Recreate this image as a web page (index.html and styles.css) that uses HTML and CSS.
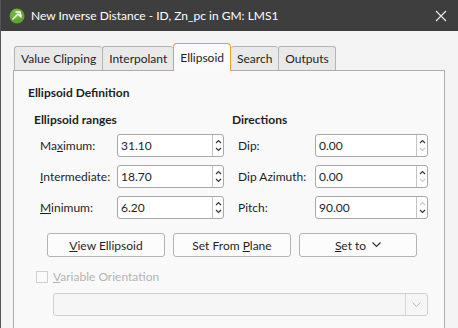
FILE: index.html
```html
<!DOCTYPE html>
<html lang="en">

<head>
    <meta charset="UTF-8">
    <title>New Inverse Distance</title>
    <link rel="stylesheet" href="styles.css">
</head>

<body>
    <div class="window">
        <div class="titlebar">
            <svg class="app-icon" width="16" height="16" viewBox="0 0 16 16">
                <circle cx="8" cy="8" r="7.5" fill="#5ea72f" />
                <circle cx="7" cy="6" r="5" fill="#7cc04a" opacity="0.6" />
                <path d="M4 11 L9 6 M7 4 L11 4 L12 8 M9 6 L12 9" stroke="#fff" stroke-width="1.6" fill="none" stroke-linecap="round" />
            </svg>
            <span class="title">New Inverse Distance - ID, Zn_pc in GM: LMS1</span>
            <svg class="close" width="12" height="12" viewBox="0 0 12 12">
                <path d="M1 1 L11 11 M11 1 L1 11" stroke="#e8e8e8" stroke-width="1.2" />
            </svg>
        </div>

        <div class="content">
            <div class="tabs">
                <div class="tab">Value Clipping</div>
                <div class="tab">Interpolant</div>
                <div class="tab active">Ellipsoid</div>
                <div class="tab">Search</div>
                <div class="tab">Outputs</div>
            </div>

            <div class="panel">
                <div class="heading">Ellipsoid Definition</div>

                <div class="groups">
                    <div class="group left">
                        <div class="subheading">Ellipsoid ranges</div>
                        <div class="row">
                            <label>Ma<u>x</u>imum:</label>
                            <div class="spin">
                                <span class="val">31.10</span>
                                <span class="arrows">
                                    <svg class="up" width="7" height="5" viewBox="0 0 7 5"><path d="M1 4 L3.5 1.5 L6 4" /></svg>
                                    <svg class="down" width="7" height="5" viewBox="0 0 7 5"><path d="M1 1 L3.5 3.5 L6 1" /></svg>
                                </span>
                            </div>
                        </div>
                        <div class="row">
                            <label><u>I</u>ntermediate:</label>
                            <div class="spin">
                                <span class="val">18.70</span>
                                <span class="arrows">
                                    <svg class="up" width="7" height="5" viewBox="0 0 7 5"><path d="M1 4 L3.5 1.5 L6 4" /></svg>
                                    <svg class="down" width="7" height="5" viewBox="0 0 7 5"><path d="M1 1 L3.5 3.5 L6 1" /></svg>
                                </span>
                            </div>
                        </div>
                        <div class="row">
                            <label><u>M</u>inimum:</label>
                            <div class="spin">
                                <span class="val">6.20</span>
                                <span class="arrows">
                                    <svg class="up" width="7" height="5" viewBox="0 0 7 5"><path d="M1 4 L3.5 1.5 L6 4" /></svg>
                                    <svg class="down" width="7" height="5" viewBox="0 0 7 5"><path d="M1 1 L3.5 3.5 L6 1" /></svg>
                                </span>
                            </div>
                        </div>
                    </div>

                    <div class="group right">
                        <div class="subheading">Directions</div>
                        <div class="row">
                            <label>Dip:</label>
                            <div class="spin">
                                <span class="val">0.00</span>
                                <span class="arrows">
                                    <svg class="up" width="7" height="5" viewBox="0 0 7 5"><path d="M1 4 L3.5 1.5 L6 4" /></svg>
                                    <svg class="down off" width="7" height="5" viewBox="0 0 7 5"><path d="M1 1 L3.5 3.5 L6 1" /></svg>
                                </span>
                            </div>
                        </div>
                        <div class="row">
                            <label>Dip Azimuth:</label>
                            <div class="spin">
                                <span class="val">0.00</span>
                                <span class="arrows">
                                    <svg class="up" width="7" height="5" viewBox="0 0 7 5"><path d="M1 4 L3.5 1.5 L6 4" /></svg>
                                    <svg class="down off" width="7" height="5" viewBox="0 0 7 5"><path d="M1 1 L3.5 3.5 L6 1" /></svg>
                                </span>
                            </div>
                        </div>
                        <div class="row">
                            <label>Pitch:</label>
                            <div class="spin">
                                <span class="val">90.00</span>
                                <span class="arrows">
                                    <svg class="up off" width="7" height="5" viewBox="0 0 7 5"><path d="M1 4 L3.5 1.5 L6 4" /></svg>
                                    <svg class="down" width="7" height="5" viewBox="0 0 7 5"><path d="M1 1 L3.5 3.5 L6 1" /></svg>
                                </span>
                            </div>
                        </div>
                    </div>
                </div>

                <div class="buttons">
                    <div class="btn"><span><u>V</u>iew Ellipsoid</span></div>
                    <div class="btn"><span>Set From <u>P</u>lane</span></div>
                    <div class="btn"><span><u>S</u>et to</span>
                        <svg width="9" height="6" viewBox="0 0 9 6"><path d="M0.5 0.5 L4.5 4.5 L8.5 0.5" stroke="#333" stroke-width="1.2" fill="none" /></svg>
                    </div>
                </div>

                <div class="check-row">
                    <span class="checkbox"></span>
                    <span class="check-label"><u>V</u>ariable Orientation</span>
                </div>

                <div class="combo">
                    <span class="combo-field"></span>
                    <span class="combo-arrow">
                        <svg width="9" height="6" viewBox="0 0 9 6"><path d="M0.5 0.5 L4.5 4.5 L8.5 0.5" stroke="#b8b8b8" stroke-width="1" fill="none" /></svg>
                    </span>
                </div>
            </div>
        </div>
    </div>
</body>

</html>
```

FILE: styles.css
```css
* {
    margin: 0;
    padding: 0;
    box-sizing: border-box;
}

body {
    font-family: "Lato", "Noto Sans", sans-serif;
    font-size: 12px;
    color: #1e1e1e;
    background: #f4f4f4;
}

.window {
    width: 458px;
    height: 328px;
    border-left: 1px solid #555;
    overflow: hidden;
}

.titlebar {
    height: 31px;
    background: #3e3e3e;
    display: flex;
    align-items: center;
    padding: 0 11px 0 8px;
    color: #fff;
}

.app-icon {
    margin-right: 6px;
}

.title {
    font-size: 12px;
    flex: 1;
}

.content {
    padding: 12px 13px 0 12px;
}

.tabs {
    display: flex;
    align-items: flex-end;
    height: 27px;
    padding-left: 1px;
    position: relative;
    z-index: 1;
}

.tab {
    height: 24px;
    line-height: 23px;
    padding: 0 6px;
    background: #e9e9e9;
    border: 1px solid #b4b4b4;
    border-bottom: none;
    border-right: none;
    border-radius: 3px 3px 0 0;
}

.tab:nth-child(5) {
    border-right: 1px solid #b4b4b4;
}

.tab.active {
    height: 28px;
    line-height: 27px;
    background: #fafafa;
    border: 1px solid #f0a030;
    border-bottom: none;
    margin-bottom: -1px;
    border-radius: 4px 4px 0 0;
}

.tab.active + .tab {
    border-left: none;
}

.panel {
    height: 270px;
    background: #f9f9f9;
    border: 1px solid #acacac;
    padding: 14px 14px 0 14px;
}

.heading,
.subheading {
    font-weight: bold;
    line-height: 16px;
}

.groups {
    display: flex;
    margin-top: 11px;
    padding-left: 6px;
}

.group.left {
    width: 198px;
}

.group.right {
    width: 196px;
}

.row {
    display: flex;
    align-items: center;
    margin-top: 8px;
    padding-left: 6px;
}

.subheading + .row {
    margin-top: 6px;
}

.row label {
    width: 77px;
}

.spin {
    display: flex;
    height: 23px;
    width: 107px;
    background: #fff;
    border: 1px solid #a8a8a8;
    border-radius: 3px;
}

.group.right .spin {
    width: 113px;
}

.spin .val {
    flex: 1;
    line-height: 21px;
    padding-left: 3px;
}

.arrows {
    width: 11px;
    border-left: 1px solid #c4c4c4;
    display: flex;
    flex-direction: column;
    align-items: center;
    justify-content: center;
    gap: 3px;
}

.arrows svg path {
    fill: none;
    stroke: #333;
    stroke-width: 1.1;
}

.arrows svg.off path {
    stroke: #c8c8c8;
}

.buttons {
    display: flex;
    gap: 8px;
    margin-top: 14px;
    padding-left: 19px;
}

.btn {
    width: 118px;
    height: 24px;
    border: 1px solid #b4b4b4;
    border-radius: 3px;
    background: #fcfcfc;
    display: flex;
    align-items: center;
    justify-content: center;
    gap: 6px;
}

.check-row {
    display: flex;
    align-items: center;
    margin-top: 12px;
    padding-left: 8px;
    color: #b4b4b4;
}

.checkbox {
    width: 12px;
    height: 12px;
    border: 1px solid #d0d0d0;
    background: #fafafa;
    margin-right: 5px;
}

.combo {
    display: flex;
    margin-top: 9px;
    margin-left: 25px;
    width: 375px;
    height: 23px;
    border: 1px solid #cfcfcf;
    border-radius: 3px;
    background: #f6f6f6;
}

.combo-field {
    flex: 1;
}

.combo-arrow {
    width: 22px;
    border-left: 1px solid #d8d8d8;
    display: flex;
    align-items: center;
    justify-content: center;
}
```
